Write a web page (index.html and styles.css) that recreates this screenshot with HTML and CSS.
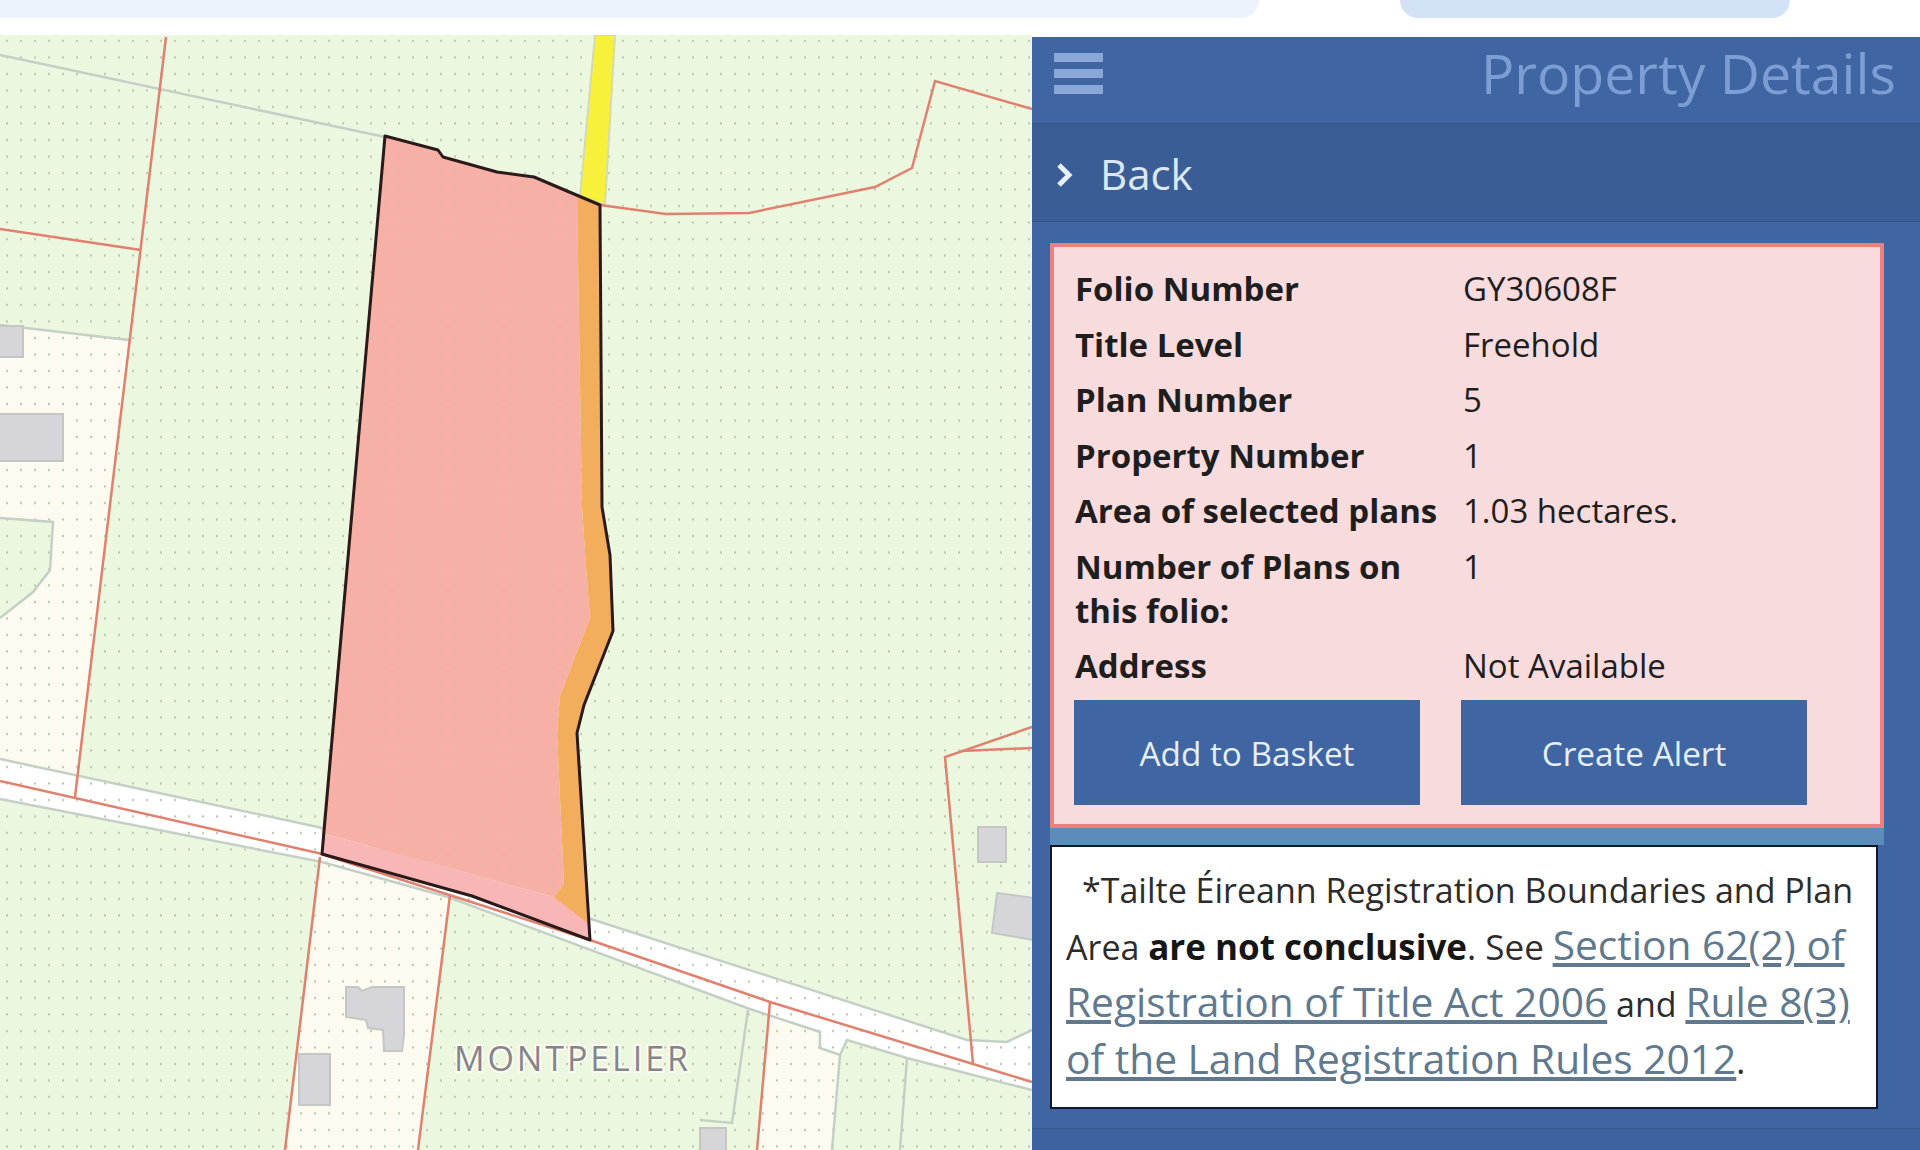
FILE: index.html
```html
<!DOCTYPE html>
<html lang="en">
<head>
    <meta charset="UTF-8">
    <meta name="viewport" content="width=device-width, initial-scale=1.0">
    <title>Property Details</title>
    <link rel="stylesheet" href="styles.css">
</head>
<body>
    <div class="topbar">
        <div class="search-strip"></div>
        <div class="search-pill"></div>
    </div>
    <div class="main">
        <div class="map">
            <svg class="map-svg" viewBox="0 35 1032 1115" width="1032" height="1115">
                <defs>
                    <pattern id="dots" width="14" height="16.5" patternUnits="userSpaceOnUse">
                        <rect x="6" y="7" width="2" height="2" fill="#b7c4aa"/>
                    </pattern>
                </defs>
                <rect class="land" x="0" y="35" width="1032" height="1115"/>
                <!-- cream parcels -->
                <polygon class="cream" points="0,325 129,340 75,797 0,781"/>
                <polygon class="land" points="0,518 53,522 50,570 33,592 0,618"/>
                <polygon class="cream" points="320,857 450,895 418,1150 285,1150"/>
                <polygon class="cream" points="770,1002 820,1032 820,1048 840,1055 832,1150 757,1150"/>
                <!-- road -->
                <polygon class="road" points="0,759 318,827 594,920 967,1040 1007,1042 1032,1030 1032,1090 907,1058 847,1040 840,1055 820,1048 820,1032 747,1008 448,897 322,862 0,799"/>
                <rect class="dots" x="0" y="35" width="1032" height="1115"/>
                <polyline class="edge" points="0,759 318,827 594,920 967,1040 1007,1042 1032,1030"/>
                <polyline class="edge" points="0,799 322,862 448,897 747,1008 820,1032 820,1048 840,1055 847,1040 907,1058 1032,1090"/>
                <polyline class="edge" points="0,55 385,137"/>
                <polyline class="edge" points="0,325 129,340"/>
                <polyline class="edge" points="0,518 53,522 50,570 33,592 0,618"/>
                <polyline class="edge" points="748,1010 732,1123 700,1120"/>
                <polyline class="edge" points="840,1055 832,1150"/>
                <polyline class="edge" points="907,1058 900,1150"/>
                <!-- buildings -->
                <rect class="bld" x="-2" y="326" width="25" height="31"/>
                <rect class="bld" x="-2" y="414" width="65" height="47"/>
                <polygon class="bld" points="346,987 358,987 362,991 372,987 404,987 404,1035 402,1051 384,1051 383,1030 368,1028 366,1020 346,1017"/>
                <rect class="bld" x="299" y="1054" width="31" height="51"/>
                <rect class="bld" x="978" y="827" width="28" height="35"/>
                <polygon class="bld" points="997,893 1034,898 1034,940 992,933"/>
                <rect class="bld" x="700" y="1128" width="26" height="30"/>
                <!-- yellow road -->
                <polygon class="yellow" points="595,35 615,35 605,205 580,196"/>
                <!-- boundaries -->
                <polyline class="bound" points="166,37 75,797"/>
                <polyline class="bound" points="0,229 141,250"/>
                <polyline class="bound" points="1032,109 935,81 912,168 875,187 749,213 666,214 600,205"/>
                <polyline class="bound" points="0,781 318,853 590,940 770,1002 973,1064 1032,1082"/>
                <polyline class="bound" points="320,857 285,1150"/>
                <polyline class="bound" points="450,895 418,1150"/>
                <polyline class="bound" points="770,1002 757,1150"/>
                <polyline class="bound" points="973,1064 945,757 1032,727"/>
                <polyline class="bound" points="961,751 1032,748"/>
                <!-- selected plan -->
                <polygon class="plan-low" points="322,833 554,897 590,912 590,940 472,896 322,854"/>
                <polygon class="plan" points="385,136 438,150 443,157 497,172 534,177 577,196 582,507 587,580 590,618 560,696 557,733 564,884 554,897 322,833"/>
                <polygon class="plan-strip" points="577,196 600,205 602,507 610,555 613,631 584,705 577,733 590,925 554,897 564,884 557,733 560,696 590,618 587,580 582,507"/>
                <polygon class="plan-dots" points="385,136 438,150 443,157 497,172 534,177 577,196 582,507 587,580 590,618 560,696 557,733 564,884 554,897 322,833"/>
                <polygon class="plan-line" points="385,136 438,150 443,157 497,172 534,177 600,205 602,507 610,555 613,631 584,705 577,733 590,940 472,896 322,854"/>
                <text class="place" x="454" y="1071">MONTPELIER</text>
            </svg>
        </div>
        <div class="panel">
            <div class="panel-head">
                <div class="burger"><span></span><span></span><span></span></div>
                <div class="panel-title">Property Details</div>
            </div>
            <div class="panel-back">
                <svg class="chevron" viewBox="0 0 17 24" width="17" height="24"><polyline points="3,2 13,12 3,22"/></svg>
                <span>Back</span>
            </div>
            <div class="panel-body">
                <div class="details-wrap">
                    <div class="details">
                        <div class="details-grid">
                            <div class="lbl">Folio Number</div><div class="val">GY30608F</div>
                            <div class="lbl">Title Level</div><div class="val">Freehold</div>
                            <div class="lbl">Plan Number</div><div class="val">5</div>
                            <div class="lbl">Property Number</div><div class="val">1</div>
                            <div class="lbl">Area of selected plans</div><div class="val">1.03 hectares.</div>
                            <div class="lbl">Number of Plans on this folio:</div><div class="val">1</div>
                            <div class="lbl">Address</div><div class="val">Not Available</div>
                        </div>
                        <div class="actions">
                            <div class="btn">Add to Basket</div>
                            <div class="btn">Create Alert</div>
                        </div>
                    </div>
                </div>
                <div class="note">
                    *Tailte Éireann Registration Boundaries and Plan Area <b>are not conclusive</b><span class="see">. See</span> <a href="#">Section 62(2) of Registration of Title Act 2006</a> and <a href="#">Rule 8(3) of the Land Registration Rules 2012</a>.
                </div>
            </div>
            <div class="panel-foot"></div>
        </div>
    </div>
</body>
</html>
```

FILE: styles.css
```css
body {
    margin: 0;
    height: 1150px;
    overflow: hidden;
    background: #fff;
    font-family: "Open Sans", Arial, sans-serif;
}
.topbar {
    height: 35px;
    display: flex;
    align-items: flex-start;
}
.search-strip {
    width: 1259px;
    height: 18px;
    background: #edf3fb;
    border-radius: 0 0 26px 0;
}
.search-pill {
    width: 390px;
    height: 18px;
    margin-left: 141px;
    background: #d4e2f8;
    border-radius: 0 0 30px 30px;
}
.main {
    display: flex;
    height: 1115px;
}
.map {
    width: 1032px;
    flex: none;
    overflow: hidden;
}
.map-svg {
    display: block;
}
.land { fill: #ecf7df; }
.cream { fill: #fdfbef; }
.road { fill: #fff; }
.dots { fill: url(#dots); }
.edge { fill: none; stroke: #c3d0c6; stroke-width: 2.5; }
.bld { fill: #d6d6da; stroke: #c5c7c5; stroke-width: 2; }
.yellow { fill: #f8f13c; stroke: #d5dab0; stroke-width: 2; }
.bound { fill: none; stroke: #e0806e; stroke-width: 2.5; }
.plan { fill: #f6b0a5; }
.plan-low { fill: #f9b6b6; }
.plan-strip { fill: #f3ae5d; }
.plan-dots { fill: url(#dots); opacity: 0.3; }
.plan-line { fill: none; stroke: #2a1a1a; stroke-width: 3; stroke-linejoin: round; }
.place {
    font-family: "Open Sans", Arial, sans-serif;
    font-size: 34px;
    letter-spacing: 2.9px;
    fill: #85858c;
    stroke: #fdfbef;
    stroke-width: 4px;
    paint-order: stroke;
}
.panel {
    flex: 1;
    margin-top: 2px;
    background: #3f66a2;
    display: flex;
    flex-direction: column;
}
.panel-head {
    height: 86px;
    display: flex;
    align-items: center;
    justify-content: space-between;
    padding: 0 24px 0 22px;
}
.burger {
    width: 49px;
    display: flex;
    flex-direction: column;
    gap: 7px;
    margin-top: -14px;
}
.burger span {
    height: 9px;
    background: #8ba6d8;
}
.panel-title {
    font-size: 55.4px;
    color: #7c9ed4;
    margin-top: -16px;
}
.panel-back {
    height: 99px;
    box-sizing: border-box;
    background: #3a5d95;
    border-top: 1px solid #365788;
    border-bottom: 1px solid #365788;
    display: flex;
    align-items: center;
    gap: 27px;
    padding: 2px 0 0 24px;
    color: #dbe8f4;
    font-size: 42px;
}
.chevron {
    margin-top: 3px;
}
.chevron polyline {
    fill: none;
    stroke: #e6f0f8;
    stroke-width: 5;
}
.panel-body {
    padding: 21px 0 0 18px;
}
.details-wrap {
    width: 834px;
    padding-bottom: 17px;
    background: #5d8cba;
}
.details {
    height: 585px;
    box-sizing: border-box;
    background: #f8dbdc;
    border: 4px solid #ee7f7d;
    padding: 20px 20px 0;
}
.details-grid {
    display: grid;
    grid-template-columns: 388px 1fr;
    margin-left: 1px;
    font-size: 33px;
    line-height: 44px;
    color: #1e1e1e;
    row-gap: 11.5px;
}
.lbl {
    font-weight: 700;
    width: 370px;
}
.actions {
    display: flex;
    gap: 41px;
    margin-top: 12px;
}
.btn {
    width: 346px;
    height: 105px;
    background: #3f66a2;
    color: #e6eef8;
    font-size: 33.3px;
    display: flex;
    align-items: center;
    justify-content: center;
}
.note {
    width: 828px;
    height: 264px;
    box-sizing: border-box;
    background: #fff;
    border: 2px solid #10182a;
    padding: 15px 14px;
    font-size: 34px;
    line-height: 57px;
    text-indent: 16px;
    color: #2c2c2c;
}
.note b {
    font-size: 35px;
    line-height: 1;
    color: #161616;
}
.see {
    font-size: 35px;
    line-height: 1;
}
.note a {
    font-size: 40.7px;
    line-height: 1;
    color: #60798f;
}
.panel-foot {
    flex: 1;
    margin-top: 19px;
    border-top: 1px solid #38598f;
    background: #3c62a0;
}
```
